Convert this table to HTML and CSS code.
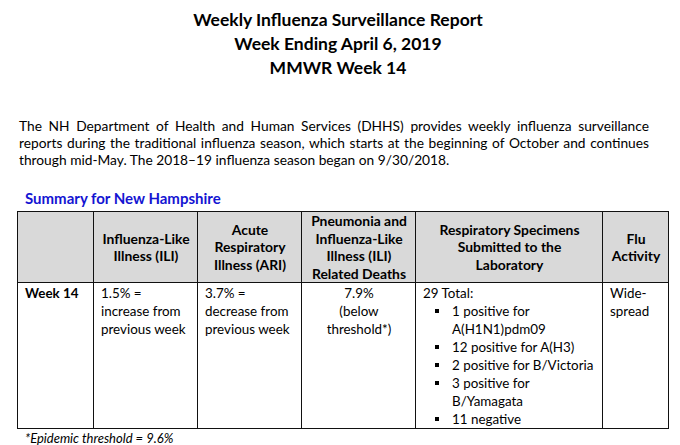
FILE: index.html
```html
<!DOCTYPE html>
<html>
<head>
<meta charset="utf-8">
<link rel="stylesheet" href="styles.css">
</head>
<body>
<div class="page">
  <h1 class="title">Weekly Influenza Surveillance Report<br>Week Ending April 6, 2019<br>MMWR Week 14</h1>
  <p class="intro"><span class="jl">The NH Department of Health and Human Services (DHHS) provides weekly influenza surveillance</span> <span class="jl">reports during the traditional influenza season, which starts at the beginning of October and continues</span> <span class="ll">through mid-May. The 2018–19 influenza season began on 9/30/2018.</span></p>
  <h2 class="summary">Summary for New Hampshire</h2>
  <table class="tbl">
    <colgroup>
      <col class="c1"><col class="c2"><col class="c3"><col class="c4"><col class="c5"><col class="c6">
    </colgroup>
    <thead>
      <tr>
        <th></th>
        <th>Influenza-Like<br>Illness (ILI)</th>
        <th>Acute<br>Respiratory<br>Illness (ARI)</th>
        <th>Pneumonia and<br>Influenza-Like<br>Illness (ILI)<br>Related Deaths</th>
        <th>Respiratory Specimens<br>Submitted to the<br>Laboratory</th>
        <th>Flu<br>Activity</th>
      </tr>
    </thead>
    <tbody>
      <tr>
        <td class="wk">Week 14</td>
        <td>1.5% =<br>increase from<br>previous week</td>
        <td>3.7% =<br>decrease from<br>previous week</td>
        <td class="ctr">7.9%<br>(below<br>threshold*)</td>
        <td>29 Total:
          <ul class="list">
            <li>1 positive for<br>A(H1N1)pdm09</li>
            <li>12 positive for A(H3)</li>
            <li>2 positive for B/Victoria</li>
            <li>3 positive for<br>B/Yamagata</li>
            <li>11 negative</li>
          </ul>
        </td>
        <td>Wide-<br>spread</td>
      </tr>
    </tbody>
  </table>
  <p class="note">*Epidemic threshold = 9.6%</p>
</div>
</body>
</html>
```
FILE: styles.css
```css
html, body {
  margin: 0;
  padding: 0;
  background: #fff;
}
body {
  font-family: Lato, "Open Sans", "Liberation Sans", sans-serif;
  color: #000;
}
.page {
  width: 680px;
  height: 445px;
  overflow: hidden;
  padding-top: 8px;
  box-sizing: border-box;
}
.title {
  margin: 0;
  text-align: center;
  font-size: 17.5px;
  line-height: 24px;
  font-weight: 700;
  padding-right: 4px;
}
.intro {
  margin: 37px 31px 0 19px;
  font-size: 13.75px;
  line-height: 17px;
}
.intro .jl {
  display: block;
  text-align: justify;
  text-align-last: justify;
  white-space: nowrap;
}
.intro .ll {
  display: block;
  white-space: nowrap;
}
.summary {
  margin: 21px 0 0 25px;
  font-size: 15px;
  line-height: 18px;
  font-weight: 700;
  color: #1414d2;
}
.tbl {
  margin: 4px 0 0 17px;
  border-collapse: collapse;
  table-layout: fixed;
  width: 652px;
  font-size: 13.4px;
}
.c1 { width: 76px; }
.c2 { width: 104px; }
.c3 { width: 104px; }
.c4 { width: 114px; }
.c5 { width: 187px; }
.c6 { width: 66px; }
.tbl th, .tbl td {
  border: 1px solid #111;
  padding: 0 6px 0 7px;
}
.tbl th {
  background: #d9d9d9;
  font-weight: 700;
  font-size: 13.9px;
  text-align: center;
  vertical-align: middle;
  height: 69px;
  line-height: 17.6px;
}
.tbl td {
  vertical-align: top;
  text-align: left;
  line-height: 18px;
  height: 143px;
  padding-top: 1px;
}
.tbl td.wk {
  font-weight: 700;
}
.tbl td.ctr {
  text-align: center;
}
.list {
  margin: 0;
  padding: 0 0 0 29px;
  list-style: none;
}
.list li {
  position: relative;
}
.list li::before {
  content: "";
  position: absolute;
  left: -17px;
  top: 7px;
  width: 4px;
  height: 4px;
  background: #000;
}
.note {
  margin: 2px 0 0 25px;
  font-size: 13px;
  line-height: 14px;
  font-style: italic;
}
```
